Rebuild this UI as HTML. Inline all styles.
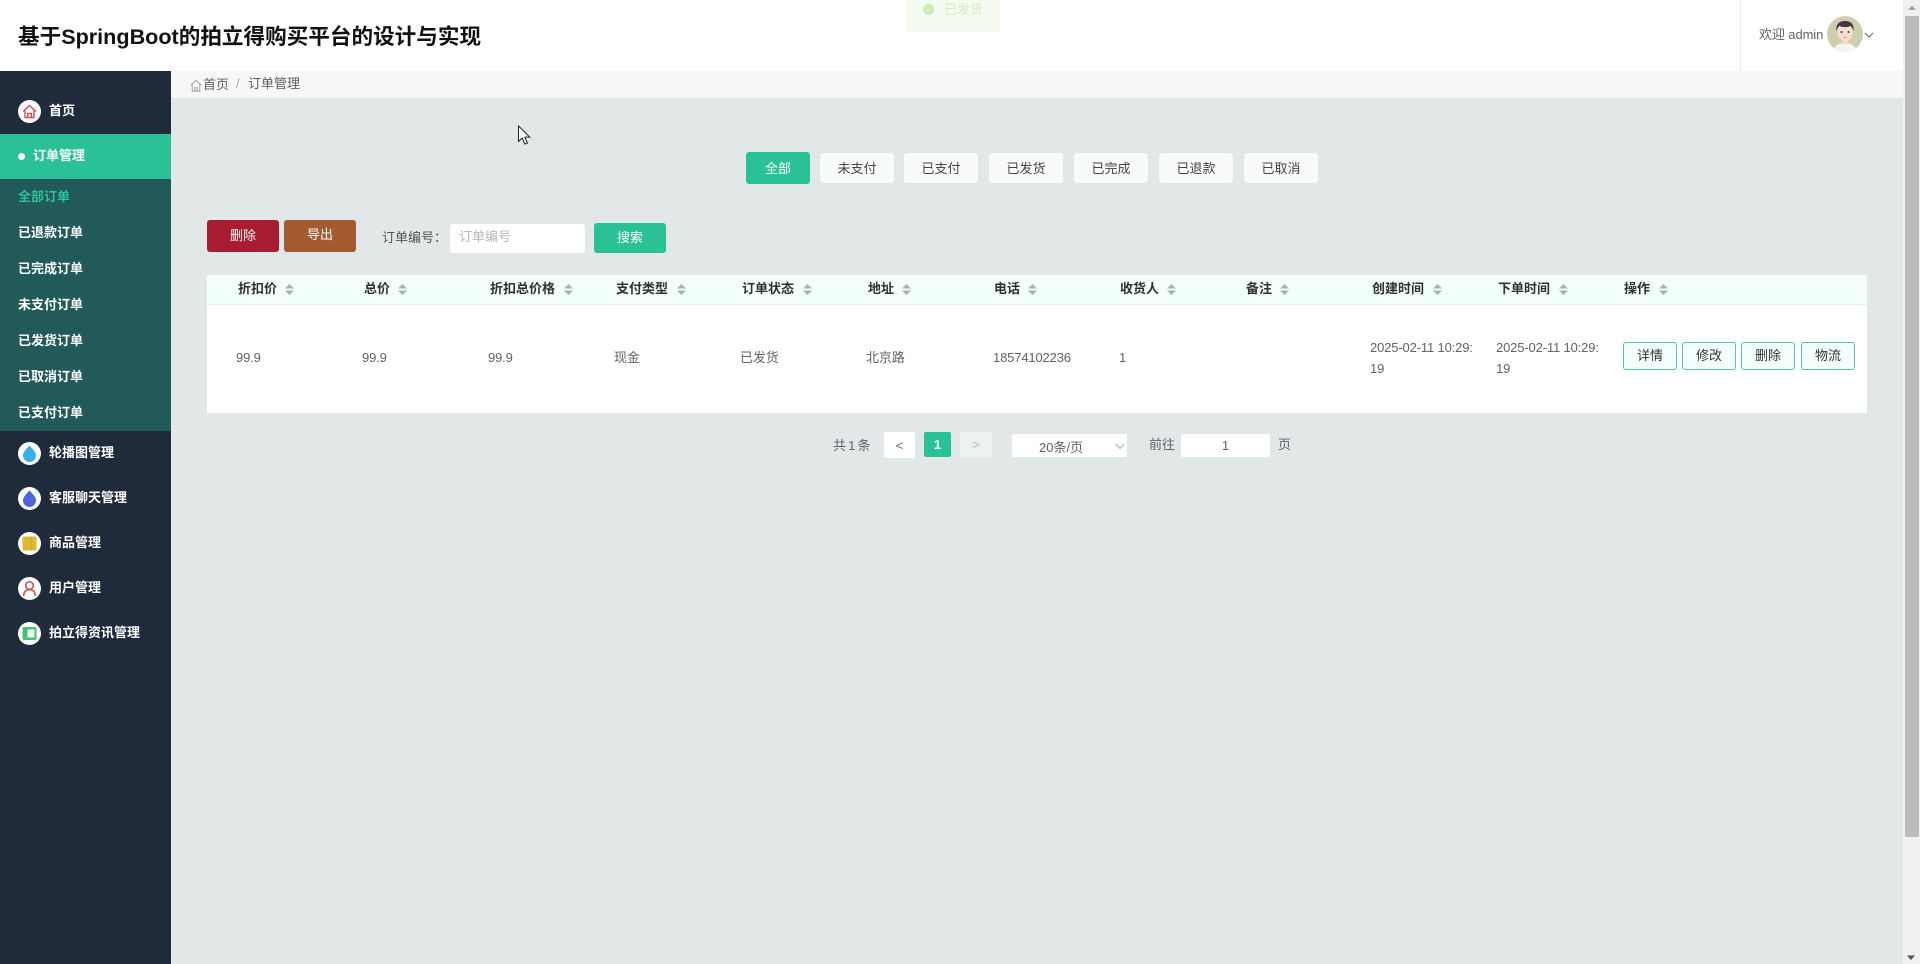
<!DOCTYPE html>
<html lang="zh-CN">
<head>
<meta charset="utf-8">
<title>基于SpringBoot的拍立得购买平台的设计与实现</title>
<style>
html,body{margin:0;padding:0;width:1920px;height:964px;overflow:hidden;background:#e2e8e8}
body{position:relative;font-family:"Liberation Sans","Noto Sans CJK SC",sans-serif;font-size:13px;color:#606266}
.a{position:absolute;box-sizing:border-box}
.t{position:absolute;white-space:nowrap;line-height:20px;height:20px;transform:translateY(1px)}
.c{text-align:center}
.side{font-weight:700;color:#fff}
.ic{position:absolute;left:18px;width:23px;height:23px;border-radius:50%;background:#fff}
.ic svg{position:absolute;left:0;top:0}
.tab{position:absolute;top:153px;height:30px;background:#f9fafb;border-radius:3px;color:#444;text-align:center;line-height:32px;box-shadow:0 0 1px #d5dbdb}
.th{position:absolute;top:279px;line-height:20px;font-weight:700;color:#303133;white-space:nowrap}
.sort{position:absolute;top:284px;width:9px;height:11px}
.td{position:absolute;top:348px;line-height:20px;color:#606266;white-space:nowrap;letter-spacing:-.15px}
.op{position:absolute;top:342px;width:54px;height:28px;border:1px solid #5cc0aa;border-radius:3px;background:#f2fffc;color:#333;text-align:center;line-height:26px;box-sizing:border-box}
</style>
</head>
<body>
<!-- header -->
<div class="a" style="left:0;top:0;width:1903px;height:71px;background:#fff"></div>
<div class="t" style="left:18px;top:22px;height:28px;line-height:28px;font-size:21.6px;font-weight:700;color:#111">基于SpringBoot的拍立得购买平台的设计与实现</div>
<div class="a" style="left:905px;top:0;width:95px;height:32px;background:#f6fbf2"></div>
<svg class="a" style="left:922px;top:3px" width="13" height="13" viewBox="0 0 13 13"><circle cx="6.5" cy="6.5" r="5.5" fill="#c9ebb5"/><path d="M4 6.5l2 2 3-4" fill="none" stroke="#eaf7e0" stroke-width="1"/></svg>
<div class="t" style="left:944px;top:-1px;color:#d3eec4">已发货</div>
<div class="a" style="left:1740px;top:0;width:1px;height:71px;background:#ececec"></div>
<div class="t" style="left:1759px;top:24px;color:#606266;letter-spacing:-.1px">欢迎 admin</div>
<svg class="a" style="left:1827px;top:16px" width="36" height="36" viewBox="0 0 36 36">
<defs><clipPath id="av"><circle cx="18" cy="18" r="18"/></clipPath></defs>
<g clip-path="url(#av)">
<rect width="36" height="36" fill="#cdcfae"/>
<path d="M6 36c1-7 7-9 12-9s11 2 12 9z" fill="#f1f8f4"/>
<rect x="15" y="22" width="6" height="6" fill="#f6d9c8"/>
<ellipse cx="18" cy="16" rx="7.6" ry="9" fill="#f8dfd2"/>
<path d="M9.500 15c-1-7 3-10 8.500-10s9.500 3 8.500 10c-1-3-2-4.500-3-5-3 1.500-8 1.500-11 0-1 .5-2 2-3 5z" fill="#4a3540"/>
<circle cx="14.500" cy="16" r="1" fill="#433"/><circle cx="21.500" cy="16" r="1" fill="#433"/>
<path d="M16.500 21.500h3" stroke="#e28b84" stroke-width="1"/>
</g></svg>
<svg class="a" style="left:1864px;top:32px" width="10" height="7" viewBox="0 0 10 7"><path d="M1 1l4 4 4-4" fill="none" stroke="#666" stroke-width="1"/></svg>

<!-- breadcrumb -->
<div class="a" style="left:171px;top:71px;width:1732px;height:27px;background:#f6f7f7"></div>
<svg class="a" style="left:190px;top:79px" width="12" height="13" viewBox="0 0 12 13"><path d="M.8 6.200L6 1.200l5.200 5M2.200 5.500v6.700h7.600V5.500M4.800 12.200V8.700h2.400v3.500" fill="none" stroke="#999" stroke-width=".9"/></svg>
<div class="t" style="left:203px;top:74px;color:#5c5f66">首页</div>
<div class="t" style="left:236px;top:73px;color:#aaa">/</div>
<div class="t" style="left:248px;top:73px;color:#5c5f66">订单管理</div>

<!-- sidebar -->
<div class="a" style="left:0;top:71px;width:171px;height:893px;background:#1f2a3a"></div>
<div class="a" style="left:0;top:134px;width:171px;height:45px;background:#2ac197"></div>
<div class="a" style="left:0;top:179px;width:171px;height:252px;background:#225a5a"></div>

<div class="ic" style="top:100px"><svg width="23" height="23" viewBox="0 0 23 23"><path d="M5 11.500l6.500-6 6.500 6M7 10.200v7.300h9v-7.300M9.700 17.500v-4h3.600v4" fill="none" stroke="#c9525a" stroke-width="1.400"/></svg></div>
<div class="t side" style="left:49px;top:100px">首页</div>
<div class="a" style="left:18px;top:153px;width:7px;height:7px;border-radius:50%;background:#fff"></div>
<div class="t side" style="left:33px;top:145px">订单管理</div>
<div class="t" style="left:18px;top:186px;font-weight:700;color:#2ac197">全部订单</div>
<div class="t side" style="left:18px;top:222px">已退款订单</div>
<div class="t side" style="left:18px;top:258px">已完成订单</div>
<div class="t side" style="left:18px;top:294px">未支付订单</div>
<div class="t side" style="left:18px;top:330px">已发货订单</div>
<div class="t side" style="left:18px;top:366px">已取消订单</div>
<div class="t side" style="left:18px;top:402px">已支付订单</div>

<div class="ic" style="top:442px"><svg width="23" height="23" viewBox="0 0 23 23"><path d="M11.500 3.500c3 3.400 6.500 6.300 6.500 10a6.500 6.500 0 0 1-13 0c0-3.700 3.500-6.600 6.500-10z" fill="#3eaee6"/></svg></div>
<div class="t side" style="left:49px;top:442px">轮播图管理</div>
<div class="ic" style="top:487px"><svg width="23" height="23" viewBox="0 0 23 23"><path d="M11.500 3.500c3 3.400 6.500 6.300 6.500 10a6.500 6.500 0 0 1-13 0c0-3.700 3.500-6.600 6.500-10z" fill="#4a66d8"/></svg></div>
<div class="t side" style="left:49px;top:487px">客服聊天管理</div>
<div class="ic" style="top:532px"><svg width="23" height="23" viewBox="0 0 23 23"><rect x="4.500" y="4.500" width="14" height="14" rx="1.500" fill="#dcb92f"/><rect x="13" y="4.500" width="1" height="14" fill="#c9a93a"/></svg></div>
<div class="t side" style="left:49px;top:532px">商品管理</div>
<div class="ic" style="top:577px"><svg width="23" height="23" viewBox="0 0 23 23"><circle cx="11.500" cy="8.500" r="3.800" fill="none" stroke="#c5604f" stroke-width="1.700"/><path d="M5.500 19c.5-4 2.500-6.500 6-6.500s5.500 2.500 6 6.500" fill="none" stroke="#c5604f" stroke-width="1.700"/></svg></div>
<div class="t side" style="left:49px;top:577px">用户管理</div>
<div class="ic" style="top:622px"><svg width="23" height="23" viewBox="0 0 23 23"><rect x="4.500" y="5" width="14" height="13" rx="1.500" fill="#45c277"/><rect x="9.500" y="7.500" width="7" height="8" fill="#eef8f0"/></svg></div>
<div class="t side" style="left:49px;top:622px">拍立得资讯管理</div>

<!-- status tabs -->
<div class="a" style="left:746px;top:152px;width:64px;height:32px;background:#2ac197;border-radius:3px;color:#fff;text-align:center;line-height:34px">全部</div>
<div class="tab" style="left:820px;width:74px">未支付</div>
<div class="tab" style="left:904px;width:74px">已支付</div>
<div class="tab" style="left:989px;width:74px">已发货</div>
<div class="tab" style="left:1074px;width:74px">已完成</div>
<div class="tab" style="left:1159px;width:74px">已退款</div>
<div class="tab" style="left:1244px;width:74px">已取消</div>

<!-- toolbar -->
<div class="a c" style="left:207px;top:220px;width:72px;height:32px;background:#a81c30;border-radius:3px;color:#fff;line-height:31px">删除</div>
<div class="a c" style="left:284px;top:220px;width:72px;height:32px;background:#a45a30;border-radius:3px;color:#fff;line-height:30px">导出</div>
<div class="t" style="left:382px;top:227px;color:#555">订单编号：</div>
<div class="a" style="left:450px;top:224px;width:135px;height:29px;background:#fff;border-radius:3px"></div>
<div class="t" style="left:459px;top:226px;color:#b5b8bd">订单编号</div>
<div class="a c" style="left:594px;top:223px;width:72px;height:30px;background:#2ac197;border-radius:3px;color:#fff;line-height:30px">搜索</div>

<!-- table -->
<div class="a" style="left:207px;top:275px;width:1660px;height:138px;background:#fff"></div>
<div class="a" style="left:207px;top:275px;width:1660px;height:30px;background:#f2fffc;border-bottom:1px solid #e8f1ef"></div>

<div class="th" style="left:238px">折扣价</div>
<svg class="sort" style="left:285px" viewBox="0 0 9 11"><path d="M4.500 0L9 4.500H0zM4.500 11L0 6.500h9z" fill="#a9b2b2"/></svg>
<div class="th" style="left:364px">总价</div>
<svg class="sort" style="left:398px" viewBox="0 0 9 11"><path d="M4.500 0L9 4.500H0zM4.500 11L0 6.500h9z" fill="#a9b2b2"/></svg>
<div class="th" style="left:490px">折扣总价格</div>
<svg class="sort" style="left:564px" viewBox="0 0 9 11"><path d="M4.500 0L9 4.500H0zM4.500 11L0 6.500h9z" fill="#a9b2b2"/></svg>
<div class="th" style="left:616px">支付类型</div>
<svg class="sort" style="left:677px" viewBox="0 0 9 11"><path d="M4.500 0L9 4.500H0zM4.500 11L0 6.500h9z" fill="#a9b2b2"/></svg>
<div class="th" style="left:742px">订单状态</div>
<svg class="sort" style="left:803px" viewBox="0 0 9 11"><path d="M4.500 0L9 4.500H0zM4.500 11L0 6.500h9z" fill="#a9b2b2"/></svg>
<div class="th" style="left:868px">地址</div>
<svg class="sort" style="left:902px" viewBox="0 0 9 11"><path d="M4.500 0L9 4.500H0zM4.500 11L0 6.500h9z" fill="#a9b2b2"/></svg>
<div class="th" style="left:994px">电话</div>
<svg class="sort" style="left:1028px" viewBox="0 0 9 11"><path d="M4.500 0L9 4.500H0zM4.500 11L0 6.500h9z" fill="#a9b2b2"/></svg>
<div class="th" style="left:1120px">收货人</div>
<svg class="sort" style="left:1167px" viewBox="0 0 9 11"><path d="M4.500 0L9 4.500H0zM4.500 11L0 6.500h9z" fill="#a9b2b2"/></svg>
<div class="th" style="left:1246px">备注</div>
<svg class="sort" style="left:1280px" viewBox="0 0 9 11"><path d="M4.500 0L9 4.500H0zM4.500 11L0 6.500h9z" fill="#a9b2b2"/></svg>
<div class="th" style="left:1372px">创建时间</div>
<svg class="sort" style="left:1433px" viewBox="0 0 9 11"><path d="M4.500 0L9 4.500H0zM4.500 11L0 6.500h9z" fill="#a9b2b2"/></svg>
<div class="th" style="left:1498px">下单时间</div>
<svg class="sort" style="left:1559px" viewBox="0 0 9 11"><path d="M4.500 0L9 4.500H0zM4.500 11L0 6.500h9z" fill="#a9b2b2"/></svg>
<div class="th" style="left:1624px">操作</div>
<svg class="sort" style="left:1659px" viewBox="0 0 9 11"><path d="M4.500 0L9 4.500H0zM4.500 11L0 6.500h9z" fill="#a9b2b2"/></svg>

<div class="td" style="left:236px">99.9</div>
<div class="td" style="left:362px">99.9</div>
<div class="td" style="left:488px">99.9</div>
<div class="td" style="left:614px">现金</div>
<div class="td" style="left:740px">已发货</div>
<div class="td" style="left:866px">北京路</div>
<div class="td" style="left:993px">18574102236</div>
<div class="td" style="left:1119px">1</div>
<div class="td" style="left:1370px;top:337px;line-height:21px">2025-02-11 10:29:<br>19</div>
<div class="td" style="left:1496px;top:337px;line-height:21px">2025-02-11 10:29:<br>19</div>
<div class="op" style="left:1623px">详情</div>
<div class="op" style="left:1682px">修改</div>
<div class="op" style="left:1741px">删除</div>
<div class="op" style="left:1801px">物流</div>

<!-- pagination -->
<div class="t" style="left:833px;top:435px;color:#606266;word-spacing:-1.500px">共 1 条</div>
<div class="a c" style="left:884px;top:432px;width:31px;height:26px;background:#fff;color:#606266;line-height:28px;border-radius:2px">&lt;</div>
<div class="a c" style="left:924px;top:432px;width:27px;height:25px;background:#2ac197;color:#fff;font-weight:700;line-height:25px;border-radius:2px">1</div>
<div class="a c" style="left:960px;top:432px;width:32px;height:25px;background:#eef1f1;color:#bbb;line-height:25px;border-radius:2px">&gt;</div>
<div class="a" style="left:1012px;top:434px;width:115px;height:23px;background:#fff;border-radius:2px"></div>
<div class="t" style="left:1039px;top:437px;color:#606266">20条/页</div>
<svg class="a" style="left:1115px;top:443px" width="10" height="7" viewBox="0 0 10 7"><path d="M.8 1l4.200 4.500L9.200 1" fill="none" stroke="#aaa" stroke-width="1"/></svg>
<div class="t" style="left:1149px;top:434px;color:#606266">前往</div>
<div class="a c" style="left:1181px;top:434px;width:89px;height:23px;background:#fff;border-radius:2px;color:#606266;line-height:23px">1</div>
<div class="t" style="left:1278px;top:434px;color:#606266">页</div>

<!-- scrollbar -->
<div class="a" style="left:1903px;top:0;width:17px;height:964px;background:#f1f1f1"></div>
<div class="a" style="left:1905px;top:16px;width:14px;height:821px;background:#bcbcbc"></div>
<svg class="a" style="left:1905px;top:4px" width="14" height="8" viewBox="0 0 14 8"><path d="M7 1.500L11 6H3z" fill="#a3a3a3"/></svg>
<svg class="a" style="left:1904px;top:954px" width="14" height="8" viewBox="0 0 14 8"><path d="M3 1.500h8L7 6z" fill="#505050"/></svg>

<!-- mouse cursor -->
<svg class="a" style="left:517px;top:125px" width="15" height="21" viewBox="0 0 15 21"><path d="M1.500 1v15.500l3.700-3.400 2.600 6 2.600-1.100-2.600-5.900h5z" fill="#fff" stroke="#222" stroke-width="1"/></svg>
</body>
</html>
